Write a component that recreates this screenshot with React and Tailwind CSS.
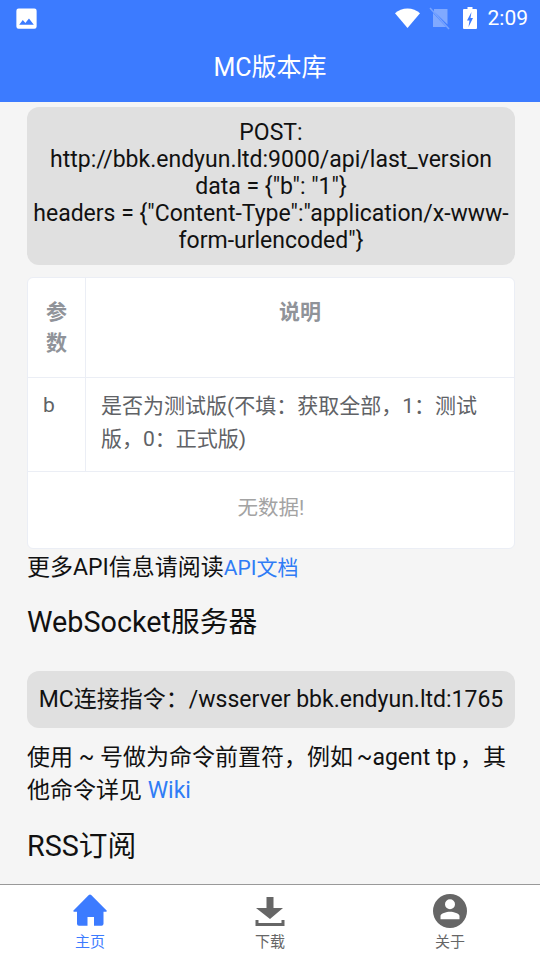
import React from "react";

const FONT = "font-['Roboto','Noto_Sans_CJK_SC',sans-serif]";

const StatusBar = () => (
  <div className="h-[36px] flex items-center pl-[13px] pr-[12px] text-white">
    <svg width="27" height="27" viewBox="0 0 24 24" fill="#fff">
      <path d="M19 3H5a2 2 0 0 0-2 2v14a2 2 0 0 0 2 2h14a2 2 0 0 0 2-2V5a2 2 0 0 0-2-2zM5.500 17.500l3.200-4.200 2.300 2.800 3.200-4.100 4.300 5.500h-13z" />
    </svg>
    <div className="flex-1" />
    <svg width="27" height="22" viewBox="0 0 27 22" fill="#fff" className="mr-[8px]">
      <path d="M13.500 21 1 6.200C4.400 3.400 8.700 1.600 13.500 1.600S22.600 3.400 26 6.200z" />
    </svg>
    <svg width="21" height="24" viewBox="0 0 21 24" className="mr-[13px]">
      <path d="M5 3h13.500v15.500L5 5.500z M4 7l13 14H4z" fill="#fff" fillOpacity="0.35" />
      <path d="M1 2l19 21" stroke="#fff" strokeOpacity="0.3" strokeWidth="1.500" />
    </svg>
    <svg width="14" height="24" viewBox="0 0 14 24" className="mr-[11px]">
      <path fill="#fff" fillRule="evenodd" d="M4.500 1h5v2H13a1 1 0 0 1 1 1v18a1 1 0 0 1-1 1H1a1 1 0 0 1-1-1V4a1 1 0 0 1 1-1h3.500zM8.500 6l-4.500 8.500h2.500L5.500 21l4.500-9H7.500z" />
    </svg>
    <span className="text-[21px] leading-none">2:09</span>
  </div>
);

const Tab = ({ label, active, children }) => (
  <div className={`flex-1 flex flex-col items-center pt-[9px] ${active ? "text-[#3c7bff]" : "text-[#666]"}`}>
    {children}
    <span className="text-[15px] leading-[18px] mt-[5px]">{label}</span>
  </div>
);

export default function App() {
  return (
    <div className={`${FONT} w-[540px] h-[960px] flex flex-col bg-[#f5f5f5] overflow-hidden`}>
      <div className="bg-[#3c7bff] shrink-0">
        <StatusBar />
        <div className="h-[66px] flex items-center justify-center text-white text-[25px] pb-[2px]">MC版本库</div>
      </div>

      <div className="flex-1 min-h-0 overflow-hidden pl-[27px] pr-[25px] pt-[5px] text-[#111]">
        <div className="bg-[#e0e0e0] rounded-[12px] px-[6px] pt-[12px] pb-[11px] text-center text-[23px] leading-[27px]">
          POST:<br />
          http://bbk.endyun.ltd:9000/api/last_version<br />
          data = {'{"b": "1"}'}<br />
          headers = {'{"Content-Type":"application/x-www-form-urlencoded"}'}
        </div>

        <div className="mt-[12px] bg-white border border-[#ebeef5] rounded-[6px] text-[21px] text-[#606266] overflow-hidden">
          <div className="flex border-b border-[#ebeef5] h-[100px] font-bold text-[#909399]">
            <div className="w-[58px] shrink-0 border-r border-[#ebeef5] px-[15px] pt-[19px] leading-[31px] text-center">参数</div>
            <div className="flex-1 pt-[19px] leading-[31px] text-center">说明</div>
          </div>
          <div className="flex border-b border-[#ebeef5] h-[94px]">
            <div className="w-[58px] shrink-0 border-r border-[#ebeef5] px-[15px] pt-[12px] leading-[31px]">b</div>
            <div className="flex-1 px-[15px] pt-[12px] leading-[33px]">是否为测试版(不填：获取全部，1：测试版，0：正式版)</div>
          </div>
          <div className="h-[76px] flex items-center justify-center text-[#a3a3a3] text-[20.500px] pb-[4px]">无数据!</div>
        </div>

        <p className="text-[23px] leading-[36px] mt-[1px]">更多API信息请阅读<span className="text-[#2f7cf6] text-[21px]">API文档</span></p>

        <h2 className="text-[28.750px] leading-[36px] mt-[18px]">WebSocket服务器</h2>

        <div className="mt-[31px] bg-[#e0e0e0] rounded-[12px] h-[57px] flex items-center justify-center text-[23px] whitespace-nowrap pt-[2px]">
          MC连接指令：/wsserver bbk.endyun.ltd:1765
        </div>

        <p className="text-[23px] leading-[33px] mt-[13px]">
          使用 ~ 号做为命令前置符，例如 <span className="ml-[-2px] mr-[-2px]">~agent tp</span> ，其他命令详见 <span className="text-[#2f7cf6]">Wiki</span>
        </p>

        <h2 className="text-[28.750px] leading-[36px] mt-[21px]">RSS订阅</h2>
      </div>

      <div className="h-[76px] shrink-0 bg-white border-t border-[#999] flex">
        <Tab label="主页" active>
          <svg width="34" height="34" viewBox="0 0 34 34" fill="#3c7bff">
            <path d="M15.800 1a1.700 1.700 0 0 1 2.400 0L33.600 16.600a.7.7 0 0 1-.5 1.200H30.500V29.700a2 2 0 0 1-2 2H21V23H14.500V31.700H6a2 2 0 0 1-2-2V17.800H1a.7.7 0 0 1-.5-1.200z" />
          </svg>
        </Tab>
        <Tab label="下载">
          <svg width="34" height="34" viewBox="0 0 34 34" fill="#666">
            <path d="M13.500 3h7v11H30L17 25 3 14h10.500zM2.500 26h3v3h23v-3h3v6h-29z" />
          </svg>
        </Tab>
        <Tab label="关于">
          <svg width="34" height="34" viewBox="0 0 34 34" fill="#666">
            <path fillRule="evenodd" d="M17 0a17 17 0 1 1 0 34 17 17 0 0 1 0-34zm0 5.300a5 5 0 1 0 0 10 5 5 0 0 0 0-10zm0 12.400c-3.500 0-9.500 1.700-9.500 4.300v3.300h19V22c0-2.600-6-4.300-9.500-4.300z" />
          </svg>
        </Tab>
      </div>
    </div>
  );
}
